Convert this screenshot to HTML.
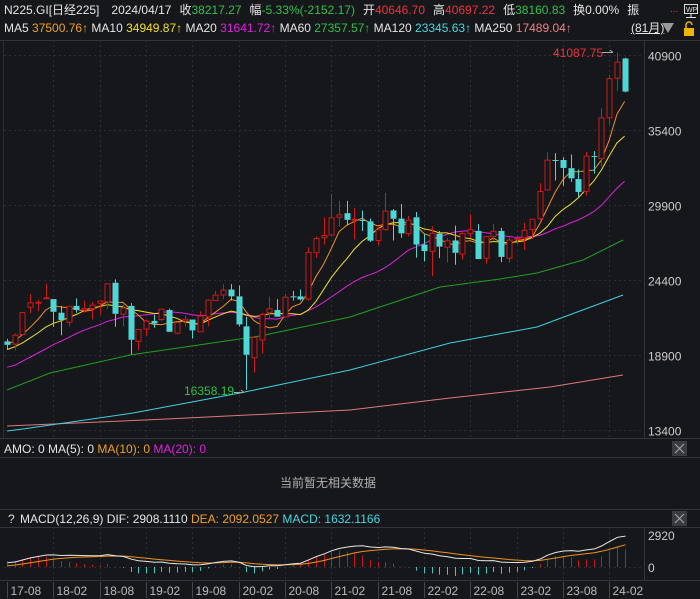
<!DOCTYPE html>
<html><head><meta charset="utf-8"><style>
html,body{margin:0;padding:0;background:#16171b;width:700px;height:599px;overflow:hidden;font-family:"Liberation Sans","Noto Sans CJK SC",sans-serif;font-size:12px;color:#e6e6e6}
.t{position:absolute;white-space:nowrap;line-height:14px}
.r{color:#f0323c}.g{color:#2fc04a}.o{color:#f0a020}.y{color:#f0e020}.m{color:#e020e0}.c{color:#40d8e0}.p{color:#f08080}
.sp{margin-left:8px}
svg{position:absolute;left:0;top:0}
</style></head><body>
<svg id="s" width="700" height="599" xmlns="http://www.w3.org/2000/svg"></svg>
<div class="t" style="left:4px;top:3px">N225.GI[日经225]<span class="sp" style="margin-left:12px">2024/04/17</span><span class="sp">收</span><span class="g">38217.27</span><span class="sp">幅</span><span class="g">-5.33%(-2152.17)</span><span class="sp">开</span><span class="r">40646.70</span><span class="sp">高</span><span class="r">40697.22</span><span class="sp">低</span><span class="g">38160.83</span><span class="sp">换0.00%</span><span class="sp">振</span></div>
<div class="t" style="left:4px;top:21px">MA5 <span class="o">37500.76↑</span> MA10 <span class="y">34949.87↑</span> MA20 <span class="m">31641.72↑</span> MA60 <span class="g">27357.57↑</span> MA120 <span class="c">23345.63↑</span> MA250 <span class="p">17489.04↑</span></div>
<div class="t r" style="left:670px;top:3px;font-size:10px">...</div>
<div class="t" style="left:631px;top:21px;text-decoration:underline">(81月)</div>
<div class="t r" style="left:553px;top:46px">41087.75</div>
<div class="t g" style="left:184px;top:384px">16358.19</div>
<div class="t" style="left:4px;top:442px">AMO: 0 MA(5): 0 <span class="o">MA(10): 0</span> <span class="m">MA(20): 0</span></div>
<div class="t" style="left:280px;top:476px;color:#b0b0b0">当前暂无相关数据</div>
<div class="t" style="left:20px;top:512px">MACD(12,26,9) DIF: 2908.1110 <span class="o">DEA: 2092.0527</span> <span class="c">MACD: 1632.1166</span></div>
<div class="t" style="left:8px;top:512px;color:#ddd">?</div>
<script>
var S=document.getElementById('s'),h='';
function L(x1,y1,x2,y2,c,w,d){h+='<line x1="'+x1+'" y1="'+y1+'" x2="'+x2+'" y2="'+y2+'" stroke="'+c+'" stroke-width="'+(w||1)+'"'+(d?' stroke-dasharray="'+d+'"':'')+'/>';}
function R(x,y,w,hh,f,s){h+='<rect x="'+x+'" y="'+y+'" width="'+w+'" height="'+hh+'" fill="'+f+'"'+(s?' stroke="'+s+'"':'')+'/>';}
function P(pts,c){h+='<polyline fill="none" stroke="'+c+'" stroke-width="1" points="'+pts.map(function(p){return p[0].toFixed(1)+','+p[1].toFixed(1)}).join(' ')+'"/>';}
function T(x,y,s,c,a,fs){h+='<text x="'+x+'" y="'+y+'" fill="'+(c||'#ccc')+'" font-size="'+(fs||12)+'" font-family="Liberation Sans, sans-serif"'+(a?' text-anchor="'+a+'"':'')+'>'+s+'</text>';}
L(0,40.5,700,40.5,'#33353a');L(0,438.5,700,438.5,'#33353a');L(0,457.5,700,457.5,'#33353a');
L(0,509.5,700,509.5,'#33353a');L(0,527.5,700,527.5,'#33353a');L(0,580.5,700,580.5,'#33353a');
L(644.5,40,644.5,438,'#33353a');L(644.5,527,644.5,580,'#33353a');L(3.5,40,3.5,438,'#2a2c30');
[448,518].forEach(function(y){R(672,y-7,15,15,'#3a3b40');L(675,y-4,684,y+5,'#aaa');L(684,y-4,675,y+5,'#aaa');});
R(684.5,4.5,13,9,'none','#ddd');T(686,12,'WP','#ddd',null,7);L(691,14,691,17,'#ddd');L(686,17.5,696,17.5,'#ddd');
h+='<polygon points="662,23 674,23 668,33" fill="#999"/>';
R(684,28,10,8,'#f0b400');h+='<path d="M686,28 v-3 a3,3 0 0 1 6,0" fill="none" stroke="#f0b400" stroke-width="1.5"/>';
var yP=function(p){return 55+(40900-p)*75/5500};
[40900,35400,29900,24400,18900,13400].forEach(function(v){var y=Math.round(yP(v))+.5;L(4,y,644,y,'#2c2e33',1,'2,3');T(648,y+5,v,'#ccc');});
var xI=function(i){return 7+i*7.72};
var labs=['17-08','18-02','18-08','19-02','19-08','20-02','20-08','21-02','21-08','22-02','22-08','23-02','23-08','24-02'];
labs.forEach(function(s,k){var x=Math.round(xI(k*6))+.5;if(k>0){L(x,40,x,438,'#2c2e33',1,'2,3');L(x,527,x,580,'#2c2e33',1,'2,3');}L(x,582,x,598,'#44464b');T(x+3,595,s,'#bbb');});
L(4,567.5,644,567.5,'#2c2e33',1,'2,3');T(648,540,'2920','#ccc');T(648,572,'0','#ccc');
var D=[[19900,20080,19280,19646],[19700,20481,19250,20356],[20400,22011,20400,22012],[22400,23382,21972,22725],[22700,22954,22119,22765],[23073,24129,23000,23098],[23000,23000,20950,22068],[22000,22500,20347,21454],[21300,22500,21000,22468],[22500,23050,22000,22202],[22200,22900,22000,22305],[22300,22800,21500,22554],[22700,22900,21850,22865],[22800,24120,22300,24120],[24200,24448,20971,21920],[21900,22600,21000,22351],[22500,22700,18948,20015],[19900,20800,19240,20773],[20800,21500,20300,21385],[21400,21860,20900,21206],[21500,22300,21400,22259],[22200,22300,20600,20601],[20500,21300,20400,21276],[21400,21800,21000,21521],[21500,21500,20110,20704],[20600,22100,20600,21756],[21700,22970,21000,22927],[22900,23600,22900,23294],[23300,24090,23000,23656],[23700,24100,22900,23205],[23200,23995,21000,21143],[21000,21700,16358,18917],[18700,20300,17600,20194],[20000,22000,19000,21878],[22000,23185,21500,22288],[22200,23000,21700,21710],[21700,23400,21700,23140],[23200,23600,22900,23185],[23200,23700,22900,22977],[23000,26800,22900,26433],[26400,27600,26000,27444],[27500,28979,27000,27663],[27700,30714,27600,28966],[29000,30200,28300,29178],[29300,30200,28400,28812],[28800,29700,27385,28860],[28800,29500,28000,28791],[28700,28900,27200,27283],[27300,28300,26954,28089],[28100,30795,28000,29452],[29500,29600,27293,28892],[28900,29960,27500,27821],[27800,29100,27600,28791],[29000,29388,26044,27001],[27000,27800,25770,26526],[26500,28338,24681,27821],[27800,28000,26000,26847],[26800,27500,25688,27279],[27300,28389,25520,26393],[26300,27900,25900,27801],[27800,29222,27500,28091],[28000,28500,25937,25937],[26000,27600,25600,27587],[27600,28502,27300,27968],[28000,28226,25700,26094],[26000,27500,25661,27327],[27400,27700,27000,27445],[27500,28600,26600,28041],[28100,28900,27400,28856],[28900,31500,28800,30887],[31000,33772,31000,33189],[33200,33700,31700,33172],[33200,33400,31300,32619],[32600,33600,31600,31857],[31800,32500,30500,30858],[30900,33800,30600,33486],[33500,33853,32200,33464],[33300,36984,32700,36286],[36300,39426,35800,39166],[39200,41087,38271,40369],[40646,40697,38160,38217]];
var prior=[19034,17518,16027,16759,16666,17235,15576,16569,16887,16450,17425,18308,19114,19041,19119,18909,19197,19651,20033,19925];
var C=prior.concat(D.map(function(d){return d[3]})),N=prior.length;
P([[7,426],[167,419],[350,410],[450,398],[550,387],[623,375]],'#e07878');
P([[7,431],[23,429],[133,413],[240,393],[350,370],[450,343],[537,327],[623,295]],'#40d0e0');
P([[7,390],[50,373],[130,355],[260,336],[350,317],[440,287],[500,279],[537,273],[583,260],[623,240]],'#20a020');
function ma(n,col){var pts=[];for(var i=0;i<D.length;i++){var s=0;for(var k=0;k<n;k++)s+=C[N+i-k];pts.push([xI(i),yP(s/n)]);}P(pts,col);}
ma(20,'#e020e0');ma(10,'#f0e020');ma(5,'#f09020');
D.forEach(function(d,i){var x=Math.round(xI(i)),up=d[3]>=d[0],c=up?'#d01818':'#4dd8d8';
var yo=yP(d[0]),yc=yP(d[3]),t=Math.min(yo,yc),b=Math.max(yo,yc);
L(x+.5,yP(d[1]),x+.5,t,c);L(x+.5,b,x+.5,yP(d[2]),c);
if(up)R(x-2,t,5,Math.max(b-t,1),'#16171b',c);else R(x-2.5,t,6,Math.max(b-t,1),c);});
L(602,52.5,613,52.5,'#aaa');L(610,50,613,52.5,'#aaa');L(234,392.5,244,392.5,'#aaa');L(241,390,244,392.5,'#aaa');
var e12=C[0],e26=C[0],dea=0,dif=[],de=[];
for(var i=0;i<C.length;i++){e12=e12+(C[i]-e12)*2/13;e26=e26+(C[i]-e26)*2/27;var df=e12-e26;dea=dea+(df-dea)*2/10;dif.push(df);de.push(dea);}
var ym=function(v){return 567-v*31/2920};
var p1=[],p2=[];
for(var i=0;i<D.length;i++){var x=Math.round(xI(i))+.5,a=dif[N+i],b=de[N+i],m=2*(a-b);L(x,567,x,ym(m),m>=0?'#c81818':'#40c8c8');p1.push([x,ym(a)]);p2.push([x,ym(b)]);}
P(p2,'#f09020');P(p1,'#e8e8e8');
S.innerHTML=h;
</script>
</body></html>
